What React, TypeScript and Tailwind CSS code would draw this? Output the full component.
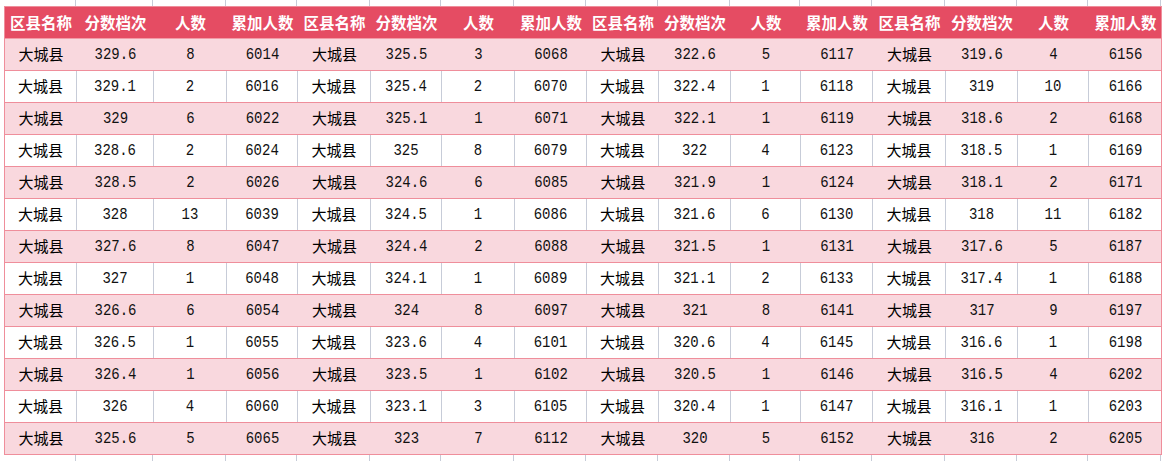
import React from "react";

const cols =
  "grid grid-cols-[72px_77px_73px_71px_73px_71px_73px_72px_72px_72px_70px_72px_73px_72px_71px_73px]";

const headers = ["区县名称", "分数档次", "人数", "累加人数"];

const groups: [string, string, string][][] = [
  [
    ["329.6", "8", "6014"],
    ["329.1", "2", "6016"],
    ["329", "6", "6022"],
    ["328.6", "2", "6024"],
    ["328.5", "2", "6026"],
    ["328", "13", "6039"],
    ["327.6", "8", "6047"],
    ["327", "1", "6048"],
    ["326.6", "6", "6054"],
    ["326.5", "1", "6055"],
    ["326.4", "1", "6056"],
    ["326", "4", "6060"],
    ["325.6", "5", "6065"],
  ],
  [
    ["325.5", "3", "6068"],
    ["325.4", "2", "6070"],
    ["325.1", "1", "6071"],
    ["325", "8", "6079"],
    ["324.6", "6", "6085"],
    ["324.5", "1", "6086"],
    ["324.4", "2", "6088"],
    ["324.1", "1", "6089"],
    ["324", "8", "6097"],
    ["323.6", "4", "6101"],
    ["323.5", "1", "6102"],
    ["323.1", "3", "6105"],
    ["323", "7", "6112"],
  ],
  [
    ["322.6", "5", "6117"],
    ["322.4", "1", "6118"],
    ["322.1", "1", "6119"],
    ["322", "4", "6123"],
    ["321.9", "1", "6124"],
    ["321.6", "6", "6130"],
    ["321.5", "1", "6131"],
    ["321.1", "2", "6133"],
    ["321", "8", "6141"],
    ["320.6", "4", "6145"],
    ["320.5", "1", "6146"],
    ["320.4", "1", "6147"],
    ["320", "5", "6152"],
  ],
  [
    ["319.6", "4", "6156"],
    ["319", "10", "6166"],
    ["318.6", "2", "6168"],
    ["318.5", "1", "6169"],
    ["318.1", "2", "6171"],
    ["318", "11", "6182"],
    ["317.6", "5", "6187"],
    ["317.4", "1", "6188"],
    ["317", "9", "6197"],
    ["316.6", "1", "6198"],
    ["316.5", "4", "6202"],
    ["316.1", "1", "6203"],
    ["316", "2", "6205"],
  ],
];

const rows = groups[0].map((_, i) => groups.flatMap((g) => ["大城县", ...g[i]]));

// empty sheet gridlines above/below the table
const Gridlines: React.FC<{ h: string }> = ({ h }) => (
  <div className={`ml-[4px] ${cols} ${h}`}>
    {Array.from({ length: 16 }).map((_, i) => (
      <div key={i} className="border-r border-[#c7ccd8]" />
    ))}
  </div>
);

export default function App() {
  return (
    <div className="w-[1166px] h-[461px] overflow-hidden bg-white">
      <Gridlines h="h-[6px]" />
      <div className="ml-[4px] w-[1158px] border-x border-t border-[#ef8e9b]">
        <div className={`${cols} h-[32px] bg-[#e54c63] border-b border-[#f39aa6]`}>
          {Array.from({ length: 4 }).flatMap((_, g) =>
            headers.map((h) => (
              <div
                key={`${g}-${h}`}
                className="flex items-center justify-center text-white font-bold text-[15.5px] font-['Noto_Sans_CJK_SC',sans-serif]"
              >
                {h}
              </div>
            ))
          )}
        </div>
        {rows.map((row, r) => {
          const pink = r % 2 === 0;
          return (
            <div
              key={r}
              className={`${cols} h-[32px] border-b border-[#ef8e9b] ${pink ? "bg-[#f9d8de]" : "bg-white"}`}
            >
              {row.map((cell, c) => (
                <div
                  key={c}
                  className={`flex items-center justify-center text-black ${
                    !pink && c < 15 ? "border-r border-[#c7ccd8]" : ""
                  } ${
                    c % 4 === 0
                      ? "text-[15px] font-['Noto_Sans_CJK_SC',sans-serif]"
                      : "text-[14px] font-['Liberation_Mono',monospace]"
                  }`}
                >
                  {c % 4 === 0 ? cell : <span className="inline-block scale-y-[1.15] text-[#111]">{cell}</span>}
                </div>
              ))}
            </div>
          );
        })}
      </div>
      <Gridlines h="h-[8px]" />
    </div>
  );
}
